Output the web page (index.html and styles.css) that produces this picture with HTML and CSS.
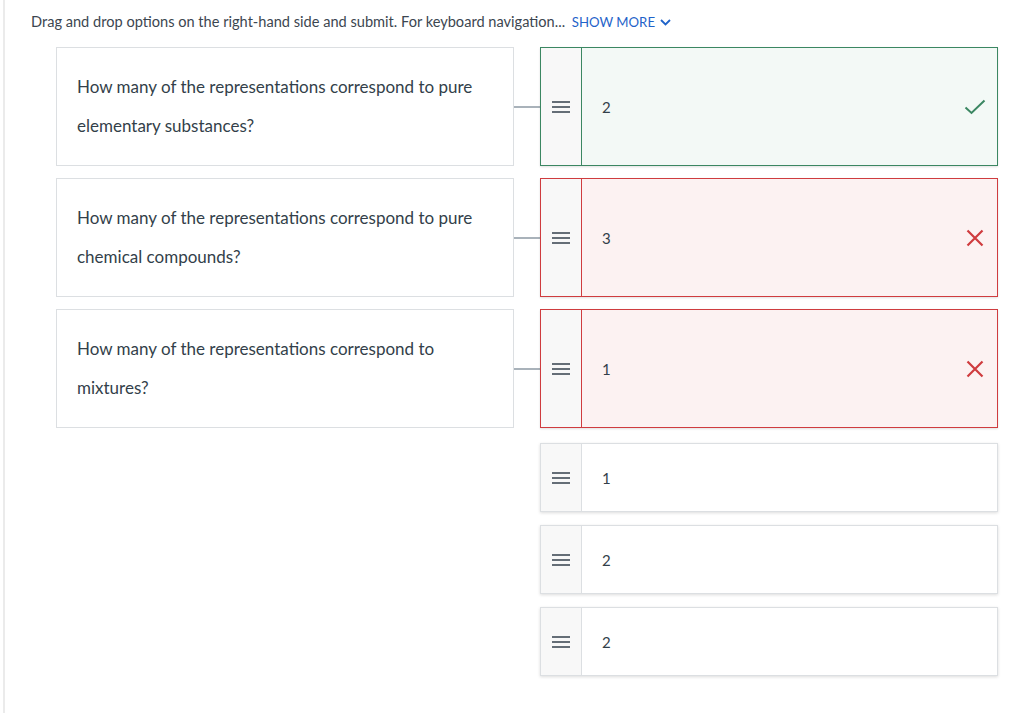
FILE: index.html
```html
<!DOCTYPE html>
<html>
<head>
<meta charset="utf-8">
<link rel="stylesheet" href="styles.css">
</head>
<body>
<div class="panel">
  <p class="intro">Drag and drop options on the right-hand side and submit. For keyboard navigation... <span class="more">SHOW MORE<svg class="chev" width="11" height="7" viewBox="0 0 11 7"><path d="M1 1 L5.5 5.5 L10 1" fill="none" stroke="#1f63c9" stroke-width="1.8"/></svg></span></p>
  <div class="board">
    <div class="pair">
      <div class="prompt">How many of the representations correspond to pure elementary substances?</div>
      <div class="link"></div>
      <div class="opt correct">
        <div class="handle"><svg width="18" height="12" viewBox="0 0 18 12"><path d="M0 1h18M0 6h18M0 11h18" stroke="#34404c" stroke-width="1.6"/></svg></div>
        <div class="val">2</div>
        <svg class="mark" width="22" height="16" viewBox="0 0 22 16"><path d="M1.5 8.5 L7.5 14 L20.5 1.5" fill="none" stroke="#3b8762" stroke-width="2"/></svg>
      </div>
    </div>
    <div class="pair">
      <div class="prompt">How many of the representations correspond to pure chemical compounds?</div>
      <div class="link"></div>
      <div class="opt wrong">
        <div class="handle"><svg width="18" height="12" viewBox="0 0 18 12"><path d="M0 1h18M0 6h18M0 11h18" stroke="#34404c" stroke-width="1.6"/></svg></div>
        <div class="val">3</div>
        <svg class="mark x" width="18" height="18" viewBox="0 0 18 18"><path d="M1.5 1.5 L16.5 16.5 M16.5 1.5 L1.5 16.5" fill="none" stroke="#cf3c3f" stroke-width="2.2"/></svg>
      </div>
    </div>
    <div class="pair">
      <div class="prompt">How many of the representations correspond to mixtures?</div>
      <div class="link"></div>
      <div class="opt wrong">
        <div class="handle"><svg width="18" height="12" viewBox="0 0 18 12"><path d="M0 1h18M0 6h18M0 11h18" stroke="#34404c" stroke-width="1.6"/></svg></div>
        <div class="val">1</div>
        <svg class="mark x" width="18" height="18" viewBox="0 0 18 18"><path d="M1.5 1.5 L16.5 16.5 M16.5 1.5 L1.5 16.5" fill="none" stroke="#cf3c3f" stroke-width="2.2"/></svg>
      </div>
    </div>
    <div class="pool">
      <div class="opt plain">
        <div class="handle"><svg width="18" height="12" viewBox="0 0 18 12"><path d="M0 1h18M0 6h18M0 11h18" stroke="#34404c" stroke-width="1.6"/></svg></div>
        <div class="val">1</div>
      </div>
      <div class="opt plain">
        <div class="handle"><svg width="18" height="12" viewBox="0 0 18 12"><path d="M0 1h18M0 6h18M0 11h18" stroke="#34404c" stroke-width="1.6"/></svg></div>
        <div class="val">2</div>
      </div>
      <div class="opt plain">
        <div class="handle"><svg width="18" height="12" viewBox="0 0 18 12"><path d="M0 1h18M0 6h18M0 11h18" stroke="#34404c" stroke-width="1.6"/></svg></div>
        <div class="val">2</div>
      </div>
    </div>
  </div>
</div>
</body>
</html>
```
FILE: styles.css
```css
html, body {
  margin: 0;
  padding: 0;
  background: #fff;
}
body {
  font-family: Lato, "Open Sans", sans-serif;
  color: #333f4a;
  width: 1024px;
  height: 713px;
  overflow: hidden;
}
.panel {
  margin-left: 3px;
  height: 713px;
  border-left: 2px solid #ebebeb;
  box-sizing: border-box;
  padding: 12px 0 0 26px;
}
.intro {
  margin: 0;
  font-size: 14.6px;
  line-height: 20px;
  color: #3c4650;
}
.more {
  color: #1f63c9;
  margin-left: 3px;
  font-size: 13.2px;
}
.chev {
  margin-left: 5px;
  vertical-align: 1px;
}
.board {
  margin-top: 15px;
  padding-left: 25px;
  display: flex;
  flex-direction: column;
  gap: 12px;
}
.pair {
  display: flex;
  align-items: center;
}
.prompt {
  width: 458px;
  height: 119px;
  box-sizing: border-box;
  border: 1px solid #dcdfe2;
  padding: 19px 20px;
  font-size: 17px;
  line-height: 39px;
  color: #333f4a;
}
.link {
  width: 26px;
  height: 2px;
  background: #a9b2ba;
}
.opt {
  width: 458px;
  box-sizing: border-box;
  display: flex;
  align-items: center;
  position: relative;
  border: 1px solid #dcdfe2;
  background: #fff;
}
.pair .opt {
  height: 119px;
}
.handle {
  width: 40px;
  align-self: stretch;
  background: #f8f8f8;
  border-right: 1px solid #dcdfe2;
  display: flex;
  align-items: center;
  justify-content: center;
}
.val {
  padding-left: 20px;
  font-size: 15px;
  flex: 1;
}
.mark {
  margin-right: 11px;
}
.mark.x {
  margin-right: 13px;
}
.correct {
  border-color: #3b8762;
  background: #f3f9f6;
  box-shadow: 0 1px 2px rgba(0,0,0,0.12);
}
.correct .handle {
  border-right-color: #3b8762;
}
.wrong {
  border-color: #cf3c3f;
  background: #fcf2f2;
  box-shadow: 0 1px 2px rgba(0,0,0,0.12);
}
.wrong .handle {
  border-right-color: #cf3c3f;
}
.pool {
  margin-top: 3px;
  padding-left: 484px;
  display: flex;
  flex-direction: column;
  gap: 13px;
}
.plain {
  height: 69px;
  border-color: #dcdfe2;
  box-shadow: 0 1px 3px rgba(0,0,0,0.14);
}
```
